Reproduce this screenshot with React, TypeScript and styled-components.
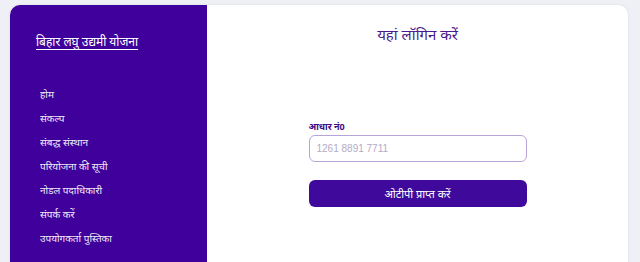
import React from "react";
import styled, { createGlobalStyle } from "styled-components";

const Global = createGlobalStyle`
  html, body { margin: 0; padding: 0; background: #eef0f5; }
  body { font-family: "Noto Sans", "Liberation Sans", sans-serif; }
  * { box-sizing: border-box; }
`;

const Page = styled.div`
  padding: 5px 12px 0 10px;
  height: 262px;
  overflow: hidden;
`;

const Card = styled.div`
  display: flex;
  height: 300px;
  background: #ffffff;
  border-radius: 10px;
  overflow: hidden;
  box-shadow: 0 0 3px rgba(0, 0, 0, 0.08);
`;

const Sidebar = styled.aside`
  width: 197px;
  flex-shrink: 0;
  background: #40009b;
  color: #ffffff;
  padding: 27px 0 0 26px;
  display: flex;
  flex-direction: column;
`;

const Brand = styled.a`
  color: #ffffff;
  font-size: 12px;
  text-decoration: underline;
  text-underline-offset: 3px;
  line-height: 20px;
`;

const Nav = styled.nav`
  margin-top: 34px;
  padding-left: 4px;
  display: flex;
  flex-direction: column;
  gap: 8px;
`;

const NavItem = styled.a`
  color: #ffffff;
  font-size: 10px;
  line-height: 16px;
  opacity: 0.92;
`;

const Main = styled.main`
  flex: 1;
  display: flex;
  flex-direction: column;
  align-items: center;
  padding-top: 18px;
`;

const Title = styled.h1`
  margin: 0;
  font-weight: 400;
  font-size: 15px;
  line-height: 22px;
  color: #4a1a8c;
`;

const Form = styled.form`
  margin-top: 76px;
  width: 218px;
  display: flex;
  flex-direction: column;
`;

const Label = styled.label`
  font-size: 9px;
  font-weight: 700;
  color: #3d0a86;
  line-height: 12px;
  margin-bottom: 2px;
`;

const Input = styled.input`
  height: 27px;
  border: 1px solid #b6a3d8;
  border-radius: 6px;
  padding: 0 7px;
  font-size: 10px;
  font-family: "Liberation Sans", sans-serif;
  outline: none;
  &::placeholder { color: #b3abc4; }
`;

const Button = styled.button`
  margin-top: 18px;
  height: 27px;
  border: none;
  border-radius: 6px;
  background: #3f0a9b;
  color: #ffffff;
  font-size: 11px;
  font-family: inherit;
`;

const items = [
  "होम",
  "संकल्प",
  "संबद्ध संस्थान",
  "परियोजना की सूची",
  "नोडल पदाधिकारी",
  "संपर्क करें",
  "उपयोगकर्ता पुस्तिका",
];

export default function App() {
  return (
    <>
      <Global />
      <Page>
        <Card>
          <Sidebar>
            <Brand>बिहार लघु उद्यमी योजना</Brand>
            <Nav>
              {items.map((t) => (
                <NavItem key={t}>{t}</NavItem>
              ))}
            </Nav>
          </Sidebar>
          <Main>
            <Title>यहां लॉगिन करें</Title>
            <Form onSubmit={(e) => e.preventDefault()}>
              <Label>आधार नं0</Label>
              <Input placeholder="1261 8891 7711" />
              <Button type="button">ओटीपी प्राप्त करें</Button>
            </Form>
          </Main>
        </Card>
      </Page>
    </>
  );
}
